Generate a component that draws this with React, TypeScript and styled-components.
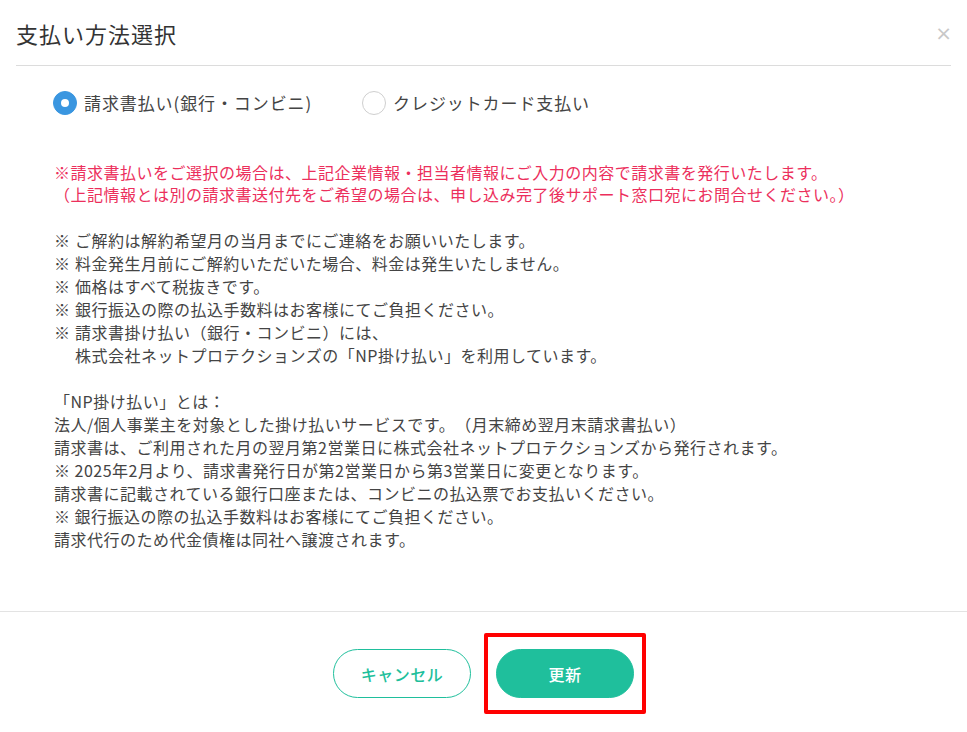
import React, { useState } from "react";
import styled, { createGlobalStyle } from "styled-components";

const GlobalStyle = createGlobalStyle`
  html, body {
    margin: 0;
    padding: 0;
    background: #fff;
  }
  body {
    font-family: "Noto Sans CJK JP", "Noto Sans", sans-serif;
    color: #333;
    text-spacing-trim: space-all;
  }
`;

const notes = [
  "ご解約は解約希望月の当月までにご連絡をお願いいたします。",
  "料金発生月前にご解約いただいた場合、料金は発生いたしません。",
  "価格はすべて税抜きです。",
  "銀行振込の際の払込手数料はお客様にてご負担ください。",
];

const App = () => {
  const [method, setMethod] = useState("invoice");

  return (
    <>
      <GlobalStyle />
      <Modal>
        <Header>
          <Title>支払い方法選択</Title>
          <Close aria-label="close">×</Close>
        </Header>

        <Body>
          <RadioRow>
            <Option onClick={() => setMethod("invoice")}>
              <Radio checked={method === "invoice"} />
              <OptionLabel>請求書払い(銀行・コンビニ)</OptionLabel>
            </Option>
            <Option onClick={() => setMethod("card")}>
              <Radio checked={method === "card"} />
              <OptionLabel>クレジットカード支払い</OptionLabel>
            </Option>
          </RadioRow>

          <Warning>
            ※請求書払いをご選択の場合は、上記企業情報・担当者情報にご入力の内容で請求書を発行いたします。
            <br />
            （上記情報とは別の請求書送付先をご希望の場合は、申し込み完了後サポート窓口宛にお問合せください。）
          </Warning>

          <Notes>
            {notes.map((n) => (
              <Note key={n}>
                <Mark>※</Mark>
                <span>{n}</span>
              </Note>
            ))}
            <Note>
              <Mark>※</Mark>
              <span>
                請求書掛け払い（銀行・コンビニ）には、
                <br />
                株式会社ネットプロテクションズの「NP掛け払い」を利用しています。
              </span>
            </Note>
          </Notes>

          <Paragraph>
            「NP掛け払い」とは：
            <br />
            法人/個人事業主を対象とした掛け払いサービスです。（月末締め翌月末請求書払い）
            <br />
            請求書は、ご利用された月の翌月第2営業日に株式会社ネットプロテクションズから発行されます。
            <br />
            ※ 2025年2月より、請求書発行日が第2営業日から第3営業日に変更となります。
            <br />
            請求書に記載されている銀行口座または、コンビニの払込票でお支払いください。
            <br />
            ※ 銀行振込の際の払込手数料はお客様にてご負担ください。
            <br />
            請求代行のため代金債権は同社へ譲渡されます。
          </Paragraph>
        </Body>

        <Footer>
          <Button variant="outline">キャンセル</Button>
          <Button variant="solid">
            更新
            <Highlight />
          </Button>
        </Footer>
      </Modal>
    </>
  );
};

export default App;

const Modal = styled.div`
  width: 967px;
  min-height: 732px;
  background: #fff;
  display: flex;
  flex-direction: column;
`;

const Header = styled.div`
  margin: 0 16px;
  height: 65px;
  border-bottom: 1px solid #dcdcdc;
  display: flex;
  align-items: center;
  justify-content: space-between;
`;

const Title = styled.h1`
  margin: 0;
  font-size: 22px;
  font-weight: 400;
  letter-spacing: 1px;
  color: #333;
`;

const Close = styled.span`
  font-family: "DejaVu Sans", sans-serif;
  font-size: 20px;
  color: #c8c8c8;
  margin-right: -1px;
  cursor: pointer;
`;

const Body = styled.div`
  padding: 25px 54px 60px;
  font-size: 16px;
  letter-spacing: 0.5px;
  color: #444;
`;

const RadioRow = styled.div`
  display: flex;
  align-items: center;
  gap: 50px;
  margin-left: -1px;
`;

const Option = styled.label`
  display: flex;
  align-items: center;
  gap: 7px;
  cursor: pointer;
`;

const Radio = styled.span<{ checked: boolean }>`
  width: 24px;
  height: 24px;
  box-sizing: border-box;
  border-radius: 50%;
  border: 1px solid ${(p) => (p.checked ? "#3a96e0" : "#cfcfcf")};
  background: ${(p) => (p.checked ? "#3a96e0" : "#fff")};
  display: flex;
  align-items: center;
  justify-content: center;

  &::after {
    content: "";
    width: 8px;
    height: 8px;
    border-radius: 50%;
    background: #fff;
    display: ${(p) => (p.checked ? "block" : "none")};
  }
`;

const OptionLabel = styled.span`
  font-size: 17px;
  letter-spacing: 0.9px;
  line-height: 24px;
  color: #444;
`;

const Warning = styled.p`
  margin: 46px 0 0;
  line-height: 22px;
  color: #ec2f5c;
  text-spacing-trim: normal;
`;

const Notes = styled.div`
  margin-top: 24px;
  line-height: 23px;
`;

const Note = styled.div`
  display: flex;
`;

const Mark = styled.span`
  flex: none;
  width: 21px;
`;

const Paragraph = styled.p`
  margin: 23px 0 0;
  line-height: 23px;
`;

const Footer = styled.div`
  border-top: 1px solid #e3e3e3;
  padding: 37px 0 31px;
  display: flex;
  justify-content: center;
  gap: 25px;
`;

const Button = styled.button<{ variant: "outline" | "solid" }>`
  position: relative;
  width: 138px;
  height: 49px;
  border-radius: 25px;
  font-family: "Noto Sans CJK JP", sans-serif;
  font-size: 16px;
  font-weight: 500;
  letter-spacing: 0.5px;
  cursor: pointer;
  border: 1px solid #1fbf9c;
  background: ${(p) => (p.variant === "solid" ? "#1fbf9c" : "#fff")};
  color: ${(p) => (p.variant === "solid" ? "#fff" : "#1fbf9c")};
`;

const Highlight = styled.span`
  position: absolute;
  top: -17px;
  bottom: -17px;
  left: -13px;
  right: -13px;
  border: 4px solid #f00;
  border-radius: 2px;
  pointer-events: none;
`;
